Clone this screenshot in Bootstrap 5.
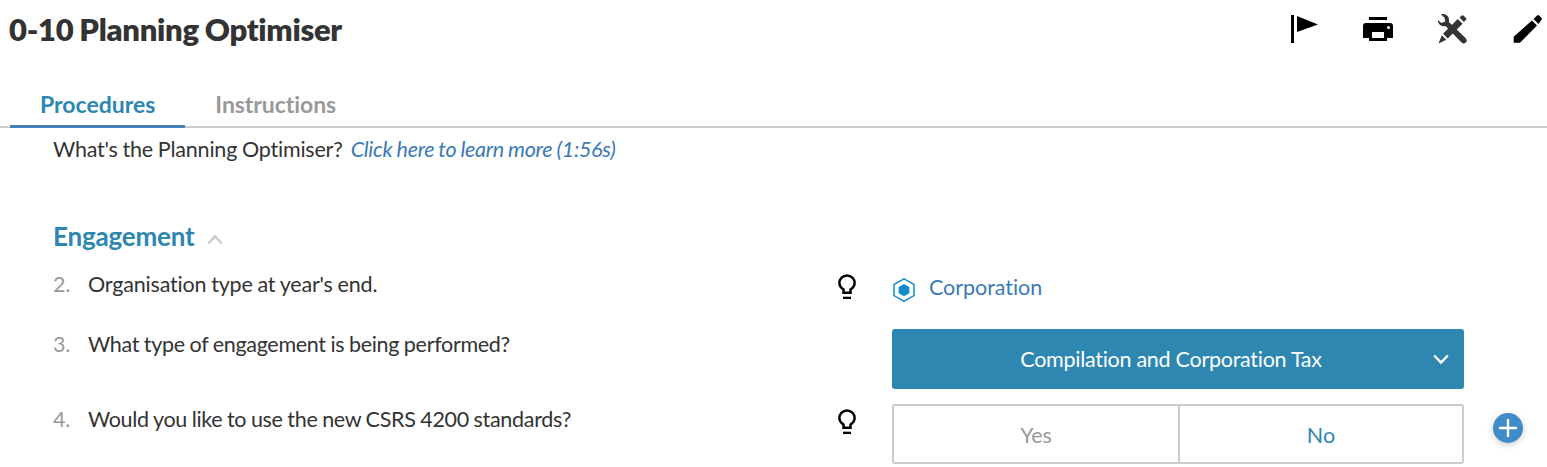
<!DOCTYPE html>
<html lang="en">
<head>
<meta charset="utf-8">
<title>0-10 Planning Optimiser</title>
<link href="https://cdn.jsdelivr.net/npm/bootstrap@5.3.0/dist/css/bootstrap.min.css" rel="stylesheet">
<style>
  body { font-family: Lato, "Liberation Sans", sans-serif; font-size: 21.5px; line-height: 30px; color: #333; height: 467px; overflow: hidden; font-variant-ligatures: none; word-spacing: -.5px; letter-spacing: -.31px; }
  svg { display: block; flex: none; }
  .page-head { height: 84px; padding: 9px 5px 0 9px; }
  .page-head h1 { font-size: 31px; line-height: 40px; font-weight: 800; word-spacing: -1px; letter-spacing: -.28px; }
  .tools { gap: 42px; padding-top: 4px; }
  .doc-tabs { height: 44px; padding-left: 10px; border-bottom: 2px solid #ccc; letter-spacing: 0; }
  .doc-tabs .nav-link { height: 44px; padding: 4px 30px 0; line-height: 32px; font-size: 23px; font-weight: 700; color: #999; border-bottom: 3px solid transparent; }
  .doc-tabs .nav-link + .nav-link { letter-spacing: -.07px; }
  .doc-tabs .nav-link.active { color: #2d87b0; border-color: #4682b9; }
  .intro { padding: 6px 0 0 53px; height: 89px; letter-spacing: -.2px; }
  .intro a { color: #3b79b7; margin-left: 8px; letter-spacing: -.3px; }
  .section-title { height: 45px; padding-left: 53px; gap: 13px; color: #2d87b0; }
  .section-title h2 { font-size: 26px; line-height: 38px; font-weight: 700; letter-spacing: -.2px; }
  .question { display: grid; grid-template-columns: 35px 749px 55px 572px auto; height: 75px; padding: 7px 0 0 53px; }
  .question.compact { height: 60px; letter-spacing: -.18px; }
  .num { color: #999; }
  .type-link { color: #3b79b7; gap: 13px; padding-top: 3px; height: 33px; letter-spacing: -.05px; }
  .question .btn { font-variant-ligatures: none; font-size: 21.5px; }
  .picker { height: 60px; background: #2d87b0; color: #fff; border-radius: 3px; padding: 0 14px 0 0; letter-spacing: -.27px; }
  .picker:hover { background: #2d87b0; color: #fff; }
  .choices { height: 60px; border: 2px solid #ccc; border-radius: 3px; }
  .choices .btn { border: 0; border-radius: 0; padding: 3px 0 0; color: #999; }
  .choices .btn + .btn { border-left: 2px solid #ccc; color: #2d87b0; }
  .choices .btn:first-child { flex: 0 0 284px; }
  .add { width: 30px; height: 30px; margin: 9px 0 0 29px; background: #428bca; box-shadow: 0 2px 7px rgba(0,0,0,.2); }
</style>
</head>
<body>
<svg class="d-none">
  <symbol id="bulb" viewBox="0 0 18 26"><path d="M5.500 18.700v-3.200C3.200 14.100 1.400 12.100 1.400 9a7.600 7.600 0 0 1 15.200 0c0 3.100-1.800 5.100-4.100 6.500v3.200z" fill="none" stroke="#000" stroke-width="2.500"/><path d="M5 22.700h8V25H5z"/></symbol>
</svg>
<header class="page-head d-flex justify-content-between align-items-start">
  <h1 class="m-0">0-10 Planning Optimiser</h1>
  <div class="tools d-flex">
    <svg width="32" height="32" viewBox="-1 0 32 32"><path d="M2 2h3v28H2zM8 3l21 8.500-21 7.500z"/></svg>
    <svg width="32" height="32" viewBox="0 0 32 32"><path d="M7 4h18v3H7z"/><path fill-rule="evenodd" d="M4 10h24q3 0 3 3v12h-6v3H7v-3H1V13q0-3 3-3zm6 9v6h12v-6zM26.500 13a1.500 1.500 0 1 0 0 3 1.500 1.500 0 0 0 0-3z"/></svg>
    <svg width="32" height="32" viewBox="-.5 0 32 32" fill="#333"><path d="M4.500 1.400C9 0 13.500 3.500 12.400 9L29.500 25.500a3 3 0 0 1-4.200 4.200L9 13C5.300 14.400 1.300 11 1.400 7l3.400 3 4-1.500-.8-3.800z"/><path d="M21.300 6.100l4.700 4.700L11.200 25.500l-4.700-4.700zM23 4.500l2.200-2q1-.8 2 .2l2.300 2.300q.9 1-.1 1.900l-2 2.100zM5.300 22.200l4.500 4.500L2 30.500z"/></svg>
    <svg width="32" height="32" viewBox="-2.500 0 32 32"><path d="M19.500 7.400l5 5L7.500 29.800H1.200v-6zM21 5.900l3.600-3.500q1-.9 2 0l2.300 2.300q1 1 0 2L26 11z"/></svg>
  </div>
</header>
<nav class="doc-tabs nav flex-nowrap">
  <a class="nav-link active" href="#"><span>Procedures</span></a>
  <a class="nav-link" href="#"><span>Instructions</span></a>
</nav>
<main>
  <div class="intro">What's the Planning Optimiser?<a class="fst-italic text-decoration-none" href="#">Click here to learn more (1:56s)</a></div>
  <div class="section-title d-flex">
    <h2 class="m-0">Engagement</h2>
    <svg width="16" height="38" viewBox="0 0 16 38"><path d="M1.200 26.500L8 19.300l6.800 7.200" fill="none" stroke="#ccc" stroke-width="2.500"/></svg>
  </div>
  <div class="question compact">
    <span class="num">2.</span><span>Organisation type at year's end.</span>
    <svg class="mt-1" width="20" height="30" viewBox="-1 -1 20 30"><use href="#bulb" width="18" height="26"/></svg>
    <a class="type-link d-flex text-decoration-none" href="#">
      <svg width="24" height="30" viewBox="0 0 24 30"><path d="M12 6.800l10 5.600v11.200l-10 5.600-10-5.600V12.400z" fill="none" stroke="#168bc9" stroke-width="1.500"/><path d="M12 12l5.400 3v6.200l-5.400 3-5.400-3V15z" fill="#168bc9"/></svg>
      <span>Corporation</span>
    </a>
  </div>
  <div class="question">
    <span class="num">3.</span><span>What type of engagement is being performed?</span><span></span>
    <button class="picker btn d-flex align-items-center"><span class="flex-fill ps-3">Compilation and Corporation Tax</span>
      <svg width="16" height="16" viewBox="0 0 16 16"><path d="M1.200 4.500L8 11.500l6.800-7" fill="none" stroke="#fff" stroke-width="2.500"/></svg>
    </button>
  </div>
  <div class="question">
    <span class="num">4.</span><span>Would you like to use the new CSRS 4200 standards?</span>
    <svg class="mt-1" width="20" height="30" viewBox="-1 -1 20 30"><use href="#bulb" width="18" height="26"/></svg>
    <div class="choices d-flex"><button class="btn">Yes</button><button class="btn flex-fill">No</button></div>
    <button class="add btn rounded-circle border-0 p-0"><svg width="30" height="30" viewBox="0 0 30 30"><path d="M15 6v18M6 15h18" stroke="#fff" stroke-width="2.400"/></svg></button>
  </div>
</main>
<script src="https://cdn.jsdelivr.net/npm/bootstrap@5.3.0/dist/js/bootstrap.bundle.min.js"></script>
</body>
</html>
